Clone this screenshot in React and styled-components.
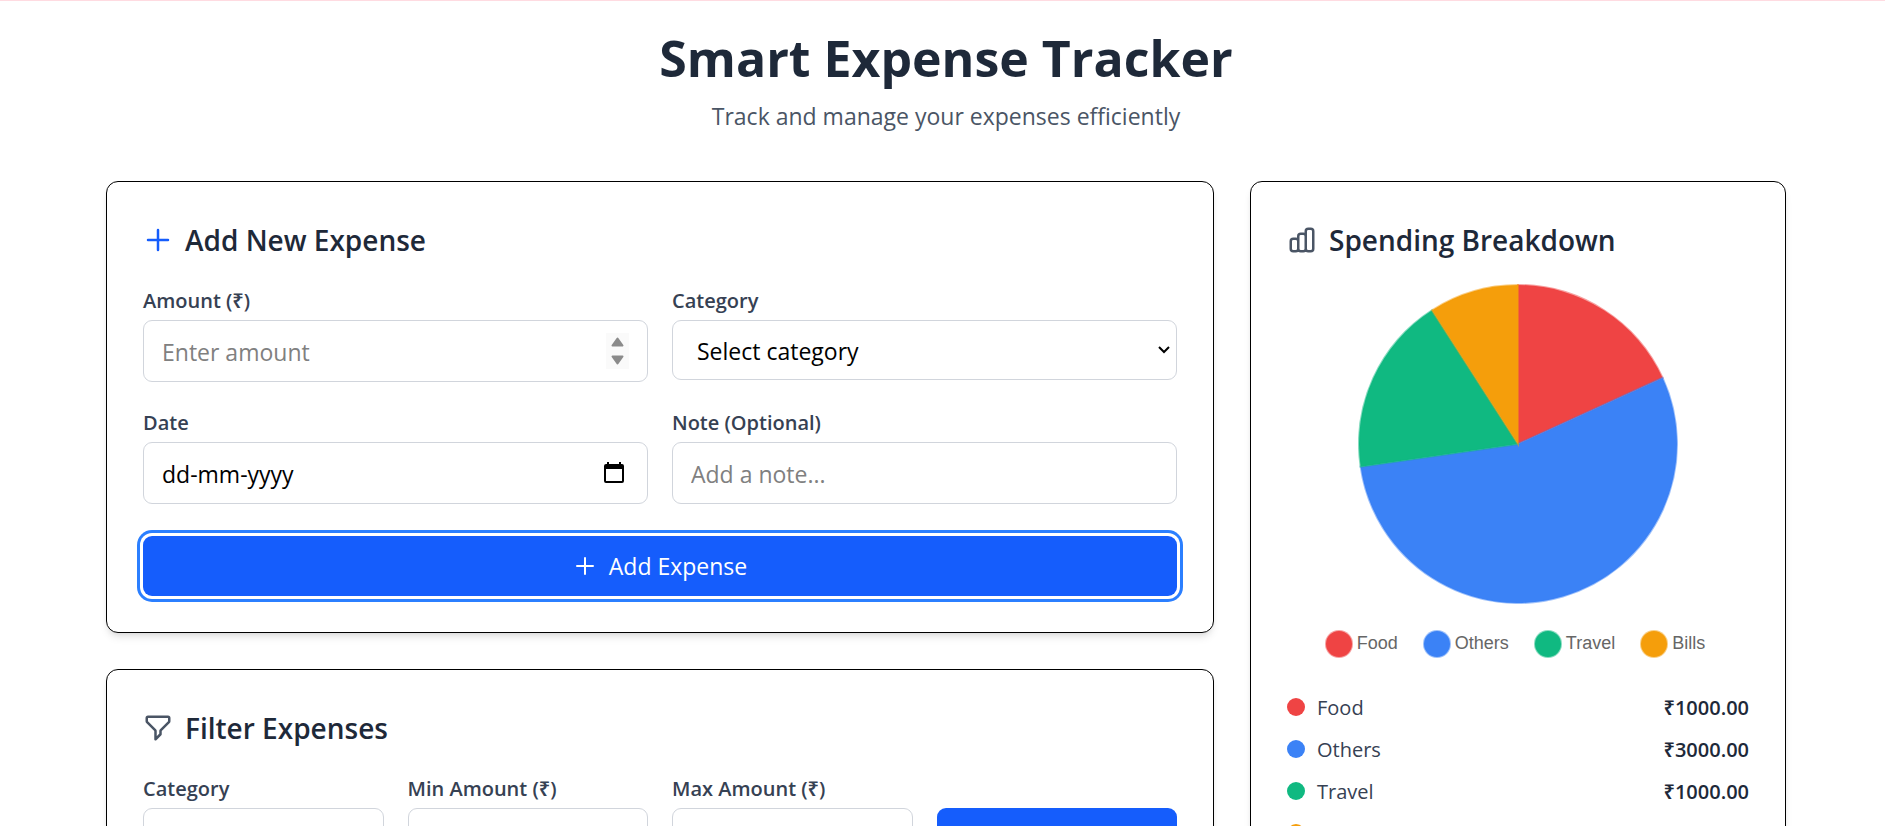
import React, { useState } from "react";
import styled, { createGlobalStyle } from "styled-components";

const GlobalStyle = createGlobalStyle`
  * {
    box-sizing: border-box;
  }

  body {
    margin: 0;
    background-color: #ffffff;
    font-family: "Segoe UI", "Open Sans", "Noto Sans", sans-serif;
    color: #1e2939;
  }

  h1,
  h2,
  p,
  ul {
    margin: 0;
    padding: 0;
  }

  input,
  select,
  button {
    font-family: inherit;
  }
`;

const Page = styled.div`
  border-top: 1px solid #ffdbe1;
  padding: 24px 99px 36px 106px;
`;

const PageHeader = styled.header`
  display: flex;
  flex-direction: column;
  align-items: center;
  margin-bottom: 47px;
`;

const Title = styled.h1`
  font-size: 50px;
  font-weight: 700;
  line-height: 66px;
  margin-bottom: 7px;
`;

const Subtitle = styled.p`
  font-size: 23px;
  line-height: 36px;
  color: #4a5565;
`;

const Layout = styled.main`
  display: grid;
  grid-template-columns: repeat(3, minmax(0, 1fr));
  gap: 36px;
  align-items: start;
`;

const MainColumn = styled.div`
  grid-column: span 2;
  display: flex;
  flex-direction: column;
  gap: 36px;
`;

const Card = styled.section`
  border: 1px solid #000000;
  border-radius: 12px;
  padding: 36px;
  background-color: #ffffff;
  box-shadow: 0 6px 9px -2px rgba(0, 0, 0, 0.1), 0 3px 6px -3px rgba(0, 0, 0, 0.1);
`;

const CardTitle = styled.h2`
  display: flex;
  align-items: center;
  gap: 12px;
  font-size: 28px;
  font-weight: 600;
  line-height: 44px;
  margin-bottom: 22px;
`;

const Icon = styled.svg`
  flex: none;
  width: ${(props) => props.$size || 30}px;
  height: ${(props) => props.$size || 30}px;
  fill: none;
  stroke: ${(props) => props.$color || "#4a5565"};
  stroke-width: 2;
  stroke-linecap: round;
  stroke-linejoin: round;
`;

const FieldGrid = styled.div`
  display: grid;
  grid-template-columns: repeat(${(props) => props.$columns}, minmax(0, 1fr));
  gap: 24px;
`;

const Field = styled.div`
  display: flex;
  flex-direction: column;
`;

const Label = styled.label`
  font-size: 20px;
  font-weight: 600;
  line-height: 34px;
  margin-bottom: 2px;
  color: #364153;
`;

const InputBox = styled.div`
  display: flex;
  align-items: center;
  height: 62px;
  border: 1px solid #d1d5dc;
  border-radius: 9px;
  padding: 0 18px;
  background-color: #ffffff;
`;

const Input = styled.input`
  flex: 1;
  min-width: 0;
  height: 100%;
  border: none;
  outline: none;
  padding: 2px 0 0;
  background: none;
  font-size: 23px;
  color: #000000;
  appearance: textfield;

  &::placeholder {
    color: ${(props) => (props.$darkHint ? "#000000" : "#808080")};
    opacity: 1;
  }

  &::-webkit-inner-spin-button {
    appearance: none;
  }
`;

const Stepper = styled.div`
  display: flex;
  flex-direction: column;
  width: 23px;
  height: 36px;
  background-color: #fafafa;
`;

const StepButton = styled.button`
  display: flex;
  flex: 1;
  align-items: center;
  justify-content: center;
  border: none;
  padding: 0;
  background: none;
`;

const CalendarButton = styled.button`
  display: flex;
  border: none;
  padding: 0;
  margin-right: 5px;
  background: none;
`;

const SelectBox = styled.div`
  position: relative;
`;

const StyledSelect = styled.select`
  display: block;
  width: 100%;
  height: 60px;
  border: 1px solid #d1d5dc;
  border-radius: 9px;
  padding: 2px 24px 0;
  background-color: #ffffff;
  font-size: 23px;
  color: #000000;
  appearance: none;
`;

const SelectArrow = styled.svg`
  position: absolute;
  top: 25px;
  right: 6px;
  width: 14px;
  height: 10px;
  pointer-events: none;
`;

const Button = styled.button`
  display: flex;
  align-items: center;
  justify-content: center;
  gap: 12px;
  width: 100%;
  height: 60px;
  border: none;
  border-radius: 9px;
  background-color: #155dfc;
  color: #ffffff;
  font-size: 23px;
  cursor: pointer;
`;

const SubmitButton = styled(Button)`
  margin-top: 32px;
  box-shadow: 0 0 0 3px #ffffff, 0 0 0 6px #2b7fff;
`;

const ApplyButton = styled(Button)`
  align-self: end;
  height: 62px;
`;

const ChartBox = styled.div`
  display: flex;
  flex-direction: column;
  align-items: center;
  height: 384px;
  margin-bottom: 23px;
`;

const Pie = styled.svg`
  width: 320px;
  height: 320px;
`;

const Legend = styled.ul`
  display: flex;
  gap: 25px;
  margin-top: 26px;
  padding-right: 6px;
  list-style: none;
  font-family: Arial, "Liberation Sans", sans-serif;
  font-size: 18px;
  line-height: 26px;
  color: #666666;
`;

const LegendItem = styled.li`
  display: flex;
  gap: 4px;
`;

const LegendDot = styled.span`
  width: 28px;
  height: 28px;
  border: 1px solid rgba(255, 255, 255, 0.5);
  border-radius: 50%;
  background-color: ${(props) => props.$color};
`;

const TotalList = styled.ul`
  display: flex;
  flex-direction: column;
  gap: 10px;
  list-style: none;
`;

const TotalRow = styled.li`
  display: flex;
  align-items: center;
  gap: 12px;
  font-size: 20px;
  line-height: 30px;
`;

const Dot = styled.span`
  width: 18px;
  height: 18px;
  border-radius: 50%;
  background-color: ${(props) => props.$color};
`;

const TotalName = styled.span`
  flex: 1;
  padding-top: 2px;
  color: #364153;
`;

const TotalAmount = styled.span`
  padding-top: 2px;
  font-weight: 600;
`;

const categories = [
  { name: "Food", total: 1000, color: "#ef4444" },
  { name: "Others", total: 3000, color: "#3b82f6" },
  { name: "Travel", total: 1000, color: "#10b981" },
  { name: "Bills", total: 500, color: "#f59e0b" },
];

const PlusIcon = ({ size, color }) => (
  <Icon viewBox="0 0 24 24" $size={size} $color={color} aria-hidden="true">
    <path d="M12 4v16m8-8H4" />
  </Icon>
);

const FunnelIcon = () => (
  <Icon viewBox="0 0 24 24" aria-hidden="true">
    <path d="M3 4a1 1 0 011-1h16a1 1 0 011 1v2.586a1 1 0 01-.293.707l-6.414 6.414a1 1 0 00-.293.707V17l-4 4v-6.586a1 1 0 00-.293-.707L3.293 7.293A1 1 0 013 6.586V4z" />
  </Icon>
);

const BarsIcon = () => (
  <Icon viewBox="0 0 24 24" aria-hidden="true">
    <path d="M9 19v-6a2 2 0 00-2-2H5a2 2 0 00-2 2v6a2 2 0 002 2h2a2 2 0 002-2zm0 0V9a2 2 0 012-2h2a2 2 0 012 2v10m-6 0a2 2 0 002 2h2a2 2 0 002-2m0 0V5a2 2 0 012-2h2a2 2 0 012 2v14a2 2 0 01-2 2h-2a2 2 0 01-2-2z" />
  </Icon>
);

const CalendarIcon = () => (
  <svg width="20" height="22" viewBox="0 0 20 22" aria-hidden="true">
    <path
      fill="#000000"
      fillRule="evenodd"
      d="M3 0h2v2h10V0h2v2h1a2 2 0 012 2v15a2 2 0 01-2 2H2a2 2 0 01-2-2V4a2 2 0 012-2h1V0zM2 7v12h16V7H2z"
    />
  </svg>
);

const RADIUS = 159;

const getSlices = () => {
  const sum = categories.reduce((acc, category) => acc + category.total, 0);
  let angle = -Math.PI / 2;

  return categories.map(({ name, total, color }) => {
    const sweep = (total / sum) * Math.PI * 2;
    const start = [160 + RADIUS * Math.cos(angle), 160 + RADIUS * Math.sin(angle)];
    angle += sweep;
    const end = [160 + RADIUS * Math.cos(angle), 160 + RADIUS * Math.sin(angle)];
    const large = sweep > Math.PI ? 1 : 0;
    return { name, color, d: `M160 160L${start.join(" ")}A${RADIUS} ${RADIUS} 0 ${large} 1 ${end.join(" ")}Z` };
  });
};

const SpendingPie = () => (
  <Pie viewBox="0 0 320 320" role="img" aria-label="Spending Breakdown">
    {getSlices().map((slice) => (
      <path key={slice.name} d={slice.d} fill={slice.color} stroke={slice.color} strokeOpacity="0.5" strokeWidth="2" />
    ))}
  </Pie>
);

const Select = ({ hint, ...props }) => (
  <SelectBox>
    <StyledSelect {...props}>
      <option value="">{hint}</option>
      {categories.map((category) => (
        <option key={category.name} value={category.name}>
          {category.name}
        </option>
      ))}
    </StyledSelect>
    <SelectArrow viewBox="0 0 14 10" aria-hidden="true">
      <path d="M2 2l5 5 5-5" fill="none" stroke="#000000" strokeWidth="2" />
    </SelectArrow>
  </SelectBox>
);

const App = () => {
  const [form, setForm] = useState({ amount: "", category: "", date: "", note: "" });

  const handleChange = (e) => {
    setForm({ ...form, [e.target.name]: e.target.value });
  };

  const stepAmount = (step) => {
    setForm({ ...form, amount: String(Number(form.amount) + step) });
  };

  const handleSubmit = (e) => {
    e.preventDefault();
  };

  return (
    <Page>
      <GlobalStyle />
      <PageHeader>
        <Title>Smart Expense Tracker</Title>
        <Subtitle>Track and manage your expenses efficiently</Subtitle>
      </PageHeader>

      <Layout>
        <MainColumn>
          <Card>
            <CardTitle>
              <PlusIcon color="#155dfc" />
              Add New Expense
            </CardTitle>
            <form onSubmit={handleSubmit}>
              <FieldGrid $columns={2}>
                <Field>
                  <Label htmlFor="amount">Amount (₹)</Label>
                  <InputBox>
                    <Input id="amount" name="amount" type="number" placeholder="Enter amount" value={form.amount} onChange={handleChange} />
                    <Stepper>
                      <StepButton type="button" aria-label="Increase amount" onClick={() => stepAmount(1)}>
                        <svg width="13" height="10" viewBox="0 0 13 10">
                          <path d="M6.500 1.500L11.500 8.500H1.500z" fill="#8b8b8b" stroke="#8b8b8b" strokeWidth="2" strokeLinejoin="round" />
                        </svg>
                      </StepButton>
                      <StepButton type="button" aria-label="Decrease amount" onClick={() => stepAmount(-1)}>
                        <svg width="13" height="10" viewBox="0 0 13 10">
                          <path d="M6.500 8.500L1.500 1.500h10z" fill="#8b8b8b" stroke="#8b8b8b" strokeWidth="2" strokeLinejoin="round" />
                        </svg>
                      </StepButton>
                    </Stepper>
                  </InputBox>
                </Field>
                <Field>
                  <Label htmlFor="category">Category</Label>
                  <Select id="category" name="category" hint="Select category" value={form.category} onChange={handleChange} />
                </Field>
                <Field>
                  <Label htmlFor="date">Date</Label>
                  <InputBox>
                    <Input id="date" name="date" type="text" placeholder="dd-mm-yyyy" $darkHint value={form.date} onChange={handleChange} />
                    <CalendarButton type="button" aria-label="Pick a date">
                      <CalendarIcon />
                    </CalendarButton>
                  </InputBox>
                </Field>
                <Field>
                  <Label htmlFor="note">Note (Optional)</Label>
                  <InputBox>
                    <Input id="note" name="note" type="text" placeholder="Add a note..." value={form.note} onChange={handleChange} />
                  </InputBox>
                </Field>
              </FieldGrid>
              <SubmitButton type="submit">
                <PlusIcon size={24} color="#ffffff" />
                Add Expense
              </SubmitButton>
            </form>
          </Card>

          <Card>
            <CardTitle>
              <FunnelIcon />
              Filter Expenses
            </CardTitle>
            <FieldGrid $columns={4}>
              <Field>
                <Label htmlFor="filter-category">Category</Label>
                <Select id="filter-category" hint="All" />
              </Field>
              <Field>
                <Label htmlFor="min-amount">Min Amount (₹)</Label>
                <InputBox>
                  <Input id="min-amount" type="number" />
                </InputBox>
              </Field>
              <Field>
                <Label htmlFor="max-amount">Max Amount (₹)</Label>
                <InputBox>
                  <Input id="max-amount" type="number" />
                </InputBox>
              </Field>
              <ApplyButton type="button" aria-label="Apply filters" />
            </FieldGrid>
          </Card>
        </MainColumn>

        <Card>
          <CardTitle>
            <BarsIcon />
            Spending Breakdown
          </CardTitle>
          <ChartBox>
            <SpendingPie />
            <Legend>
              {categories.map((category) => (
                <LegendItem key={category.name}>
                  <LegendDot $color={category.color} />
                  {category.name}
                </LegendItem>
              ))}
            </Legend>
          </ChartBox>
          <TotalList>
            {categories.map((category) => (
              <TotalRow key={category.name}>
                <Dot $color={category.color} />
                <TotalName>{category.name}</TotalName>
                <TotalAmount>₹{category.total.toFixed(2)}</TotalAmount>
              </TotalRow>
            ))}
          </TotalList>
        </Card>
      </Layout>
    </Page>
  );
};

export default App;
